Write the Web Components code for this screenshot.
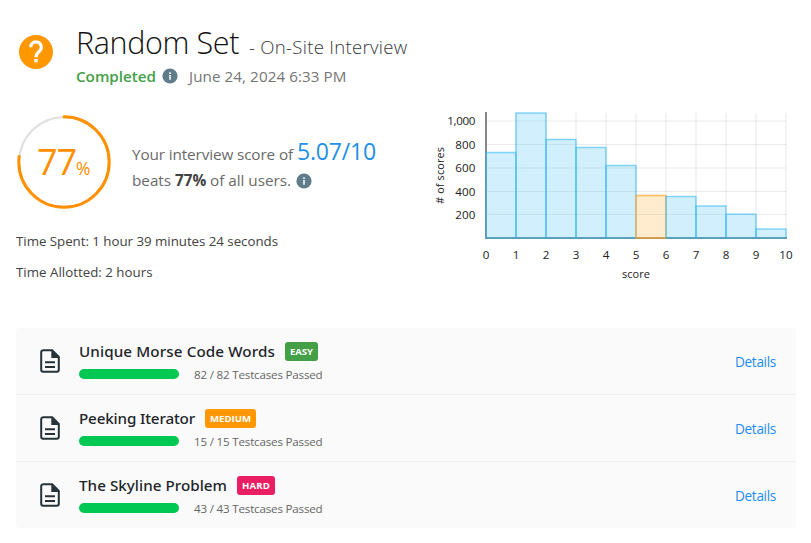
<!DOCTYPE html>
<html lang="en">
<head>
<meta charset="utf-8">
<title>Interview report</title>
<style>
body{margin:0;background:#fff;font-family:"Open Sans","Noto Sans",sans-serif}
</style>
</head>
<body>
<interview-report></interview-report>
<script>
/* Single line of text whose letter spacing is set so that it takes `w` pixels. */
class FitText extends HTMLElement{
  constructor(){super();this.attachShadow({mode:'open'}).innerHTML=`<style>:host{display:block;white-space:pre;overflow:visible}span{display:inline-block;white-space:pre}</style><span><slot></slot></span>`}
  connectedCallback(){
    const w=+this.getAttribute('w');if(!w)return;
    const s=this.shadowRoot.querySelector('span');
    this.style.width=w+'px';
    s.style.letterSpacing='0px';
    const d=(w-s.getBoundingClientRect().width)/this.textContent.length;
    s.style.letterSpacing=d.toFixed(3)+'px';
  }
}
class InfoIcon extends HTMLElement{
  constructor(){super();this.attachShadow({mode:'open'}).innerHTML=`<style>:host{display:block;width:16px;height:16px}svg{display:block}</style><svg width="16" height="16" viewBox="0 0 16 16"><circle cx="8" cy="8" r="7.6" fill="#607d8b"/><path d="M7.1 4.2h1.8v1.7H7.1zM7.1 7.1h1.8v4.7H7.1z" fill="#e8edef"/></svg>`}
}
class ReportHeader extends HTMLElement{
  constructor(){super();this.attachShadow({mode:'open'}).innerHTML=`<style>
:host{display:flex;height:90px;padding:10px 0 0 16px;box-sizing:border-box}
.q{width:40px;height:40px;margin-top:22px;margin-right:20px}
.t{display:flex;align-items:baseline;height:44px;margin-top:10px;line-height:44px;color:#111}
h1{margin:0;font-size:30.5px;font-weight:300}
.sub{font-size:18.6px;font-weight:300;color:#37383c;margin-left:10px}
.m{display:flex;align-items:center;height:24px;line-height:24px;font-size:15.2px}
.c{color:#43a047;font-weight:600}info-icon{margin:0 11px 0 6px}.d{color:#757575}
</style><svg class="q" viewBox="0 0 40 40"><circle cx="20" cy="20" r="17" fill="#ff9800"/><path d="M14.7 15.2a5.3 5.3 0 1 1 9.1 3.6c-2.2 2.1-3.8 2.9-3.8 6.4" fill="none" stroke="#fff" stroke-width="3.2"/><path d="M18.3 27h3.4v3.4h-3.4z" fill="#fff"/></svg>
<div><div class="t"><h1><fit-text w="163">Random Set</fit-text></h1><fit-text class="sub" w="158.5">- On-Site Interview</fit-text></div>
<div class="m"><fit-text class="c" w="80">Completed</fit-text><info-icon></info-icon><fit-text class="d" w="157.5">June 24, 2024 6:33 PM</fit-text></div></div>`}
}
class ScoreRing extends HTMLElement{
  constructor(){super();this.attachShadow({mode:'open'}).innerHTML=`<style>
:host{display:grid;width:94px;height:94px;color:#ff8f00}
svg,.v{grid-area:1/1}.v{display:flex;align-items:baseline;justify-content:center;line-height:94px}
.n{font-size:36px;font-weight:400}.p{font-size:17.5px;font-weight:400}
</style><svg width="94" height="94"><circle cx="47" cy="47" r="44.8" fill="none" stroke="#e0e0e0" stroke-width="2"/><circle cx="47" cy="47" r="45.2" pathLength="100" stroke-dasharray="77 23" transform="rotate(-90 47 47)" fill="none" stroke="#ff9100" stroke-width="3" stroke-linecap="round"/></svg><div class="v"><fit-text class="n" w="39">77</fit-text><fit-text class="p" w="15">%</fit-text></div>`}
}
class ScoreSummary extends HTMLElement{
  constructor(){super();this.attachShadow({mode:'open'}).innerHTML=`<style>
:host{display:block;width:420px;padding:25px 0 0 17px;box-sizing:border-box}
.top{display:flex;gap:21px}
.l{display:flex;align-items:baseline;height:30px;line-height:30px;font-size:15.3px;color:#6a6a6a;font-weight:400}
.l1{margin-top:21px}.l2{margin-top:-1px}
.s{font-size:23px;color:#1e90e6;margin-left:4px}b{font-weight:700;color:#424242}
info-icon{align-self:center;margin:2px 0 0 5px}
.time{margin-left:-1px;font-size:13.3px;line-height:31px;color:#424242}
</style><div class="top"><score-ring></score-ring><div><div class="l l1"><fit-text w="161">Your interview score of</fit-text><fit-text class="s" w="79">5.07/10</fit-text></div><div class="l l2"><fit-text w="159">beats <b>77%</b> of all users.</fit-text><info-icon></info-icon></div></div></div>
<div style="height:17px"></div><fit-text class="time" w="262">Time Spent: 1 hour 39 minutes 24 seconds</fit-text><fit-text class="time" w="136.5">Time Allotted: 2 hours</fit-text>`}
}
class ScoreChart extends HTMLElement{
  constructor(){super();
    const tops=[152.5,113,139.5,147.5,165.5,195.5,196.5,206,214.2,229];
    const X=i=>61+30*i,Y=y=>y-90;let g='';
    for(let i=1;i<=10;i++)g+=`<path d="M${X(i)} 23V148" stroke="#000" stroke-opacity=".045" stroke-width="2"/>`;
    [[121,'1,000',28],[144.5,'800',20],[168,'600',20],[191.5,'400',20],[214.5,'200',20]].forEach(([y,t,w])=>{g+=`<path d="M61 ${Y(y)}H361" stroke="#000" stroke-opacity=".08"/><text x="${50.3-w}" y="${Y(y)+4.2}" textLength="${w}">${t}</text>`});
    g+=`<path d="M61 22V148" stroke="#888" stroke-width="2"/><path d="M60 148H362" stroke="#888" stroke-width="2"/>`;
    tops.forEach((t,i)=>{const o=i==5;g+=`<rect x="${X(i)}" y="${Y(t)}" width="30" height="${238-t}" fill="${o?'#ffb74d':'#4fc3f7'}" fill-opacity="${o?.28:.26}" stroke="${o?'#ffa726':'#29b6f6'}" stroke-opacity="${o?.7:.55}" stroke-width="${1.5}"/>`});
    for(let i=0;i<=10;i++)g+=`<text x="${X(i)}" y="169" text-anchor="middle">${i}</text>`;
    this.attachShadow({mode:'open'}).innerHTML=`<style>:host{display:block}svg{display:block;font-size:11.6px;fill:#212121}</style><svg width="386" height="200" viewBox="0 0 386 200">${g}<text x="197" y="188" textLength="28" font-size="11">score</text><text transform="translate(18.6 114)rotate(-90)" textLength="57" font-size="10.8">#&#160;of&#160;scores</text></svg>`}
}
class ProblemRow extends HTMLElement{
  constructor(){super();this.attachShadow({mode:'open'})}
  connectedCallback(){const a=n=>this.getAttribute(n);this.shadowRoot.innerHTML=`<style>
:host{display:flex;height:66px;padding:0 20px 0 24px;background:#fafafa}
:host(:not(:last-of-type)){border-bottom:1px solid #eee}
.i{width:20px;height:24px;margin:21px 19px 0 0}
.t{display:flex;gap:10px;align-items:center;height:19px;margin-top:14px;line-height:19px;font-family:"Noto Sans","Open Sans",sans-serif;font-size:15.2px;font-weight:500;color:#212529}
.b{font-family:"Open Sans",sans-serif;font-size:9.6px;font-weight:700;color:#fff;background:${a('color')};border-radius:3px;padding:0 5px;height:19px}
.p{display:flex;align-items:center;gap:15px;height:20px;margin-top:3px;font-size:11.6px;color:#666;font-weight:400}
.bar{width:100px;height:10px;border-radius:5px;background:#00c853;margin-bottom:1px}
.d{margin:0 0 0 auto;line-height:68px;font-size:13.6px;color:#1e8cf5}
</style><svg class="i" viewBox="0 0 20 24"><path d="M3 1.2h9.2L18.8 8v12.8a2 2 0 0 1-2 2H3.2a2 2 0 0 1-2-2V3.2a2 2 0 0 1 2-2Z" fill="none" stroke="#263238" stroke-width="2"/><path d="M11.3 1.2V9h7.8z" fill="#263238"/><path d="M5 13.2h10M5 18h10" stroke="#263238" stroke-width="2"/></svg>
<div><div class="t"><fit-text w="${a('tw')}">${a('name')}</fit-text><span class="b"><fit-text w="${a('bw')}">${a('level')}</fit-text></span></div><div class="p"><div class="bar"></div><fit-text w="128.5">${a('cases')} Testcases Passed</fit-text></div></div><fit-text class="d" w="41">Details</fit-text>`}
}
class InterviewReport extends HTMLElement{
  constructor(){super();this.attachShadow({mode:'open'}).innerHTML=`<style>
:host{display:block;width:811px;height:543px;overflow:hidden}
.mid{display:flex;height:238px}score-chart{margin-left:5px}
score-summary{--gap:0}
.list{width:780px;margin-left:16px;border-radius:4px;overflow:hidden}
</style><report-header></report-header><div class="mid"><score-summary></score-summary><score-chart></score-chart></div>
<div class="list"><problem-row name="Unique Morse Code Words" tw="196" level="EASY" bw="23" color="#43a047" cases="82 / 82"></problem-row><problem-row name="Peeking Iterator" tw="116" level="MEDIUM" bw="41" color="#ff9800" cases="15 / 15"></problem-row><problem-row name="The Skyline Problem" tw="148" level="HARD" bw="28" color="#e91e63" cases="43 / 43"></problem-row></div>`}
}
customElements.define('fit-text',FitText);
customElements.define('info-icon',InfoIcon);
customElements.define('score-ring',ScoreRing);
customElements.define('score-chart',ScoreChart);
customElements.define('score-summary',ScoreSummary);
customElements.define('report-header',ReportHeader);
customElements.define('problem-row',ProblemRow);
customElements.define('interview-report',InterviewReport);
</script>
</body>
</html>
